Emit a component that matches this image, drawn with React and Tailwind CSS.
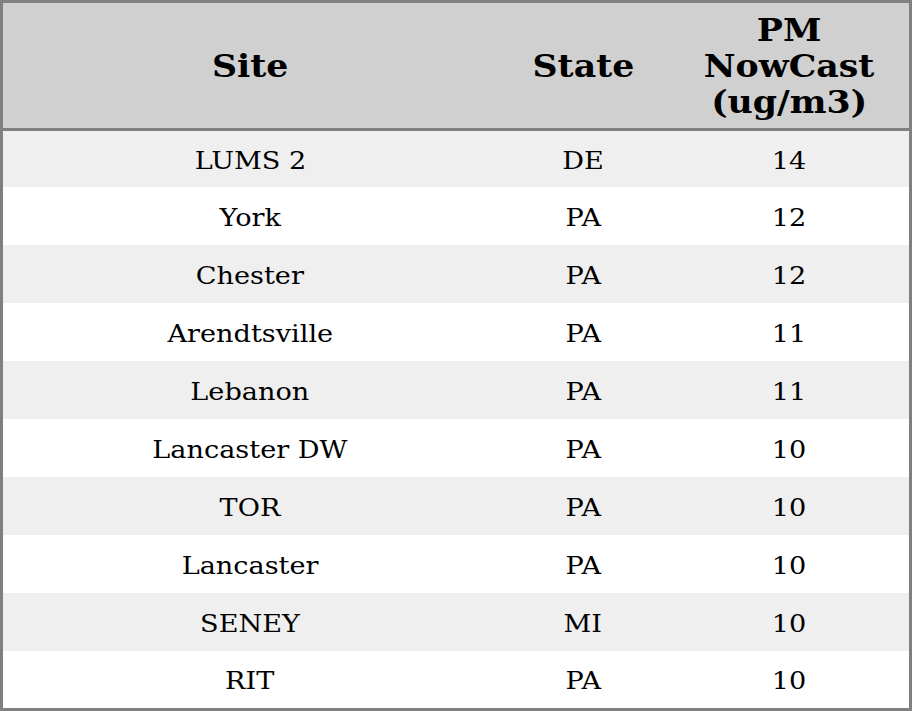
const rows = [
  { site: "LUMS 2", state: "DE", value: 14 },
  { site: "York", state: "PA", value: 12 },
  { site: "Chester", state: "PA", value: 12 },
  { site: "Arendtsville", state: "PA", value: 11 },
  { site: "Lebanon", state: "PA", value: 11 },
  { site: "Lancaster DW", state: "PA", value: 10 },
  { site: "TOR", state: "PA", value: 10 },
  { site: "Lancaster", state: "PA", value: 10 },
  { site: "SENEY", state: "MI", value: 10 },
  { site: "RIT", state: "PA", value: 10 },
];

const cols = "grid grid-cols-[494px_172px_240px]";

// the reference glyphs are a little wider than DejaVu Serif, so stretch them
const Cell = ({ children }) => (
  <div className="flex items-center justify-center pt-[3px]">
    <span className="inline-block scale-x-[1.085]">{children}</span>
  </div>
);

const Head = ({ children }) => (
  <div className="flex items-center justify-center text-center">
    <span className="inline-block scale-x-[1.12]">{children}</span>
  </div>
);

const App = () => {
  return (
    <div className="w-[912px] h-[711px] bg-white font-['DejaVu_Serif',serif] text-black border-[3px] border-[#808080]">
      <div className={`${cols} h-[128px] bg-[#d0d0d0] border-b-[3px] border-[#808080] text-[31px] font-bold leading-[36px]`}>
        <Head>Site</Head>
        <Head>State</Head>
        <Head>
          PM
          <br />
          NowCast
          <br />
          (ug/m3)
        </Head>
      </div>
      {rows.map((r, i) => (
        <div
          key={i}
          className={`${cols} text-[25px] ${i % 2 === 0 ? "bg-[#efefef]" : "bg-white"} ${
            i === 0 ? "h-[56px]" : i === rows.length - 1 ? "h-[57px]" : "h-[58px]"
          }`}
        >
          <Cell>{r.site}</Cell>
          <Cell>{r.state}</Cell>
          <Cell>{r.value}</Cell>
        </div>
      ))}
    </div>
  );
};

export default App;
